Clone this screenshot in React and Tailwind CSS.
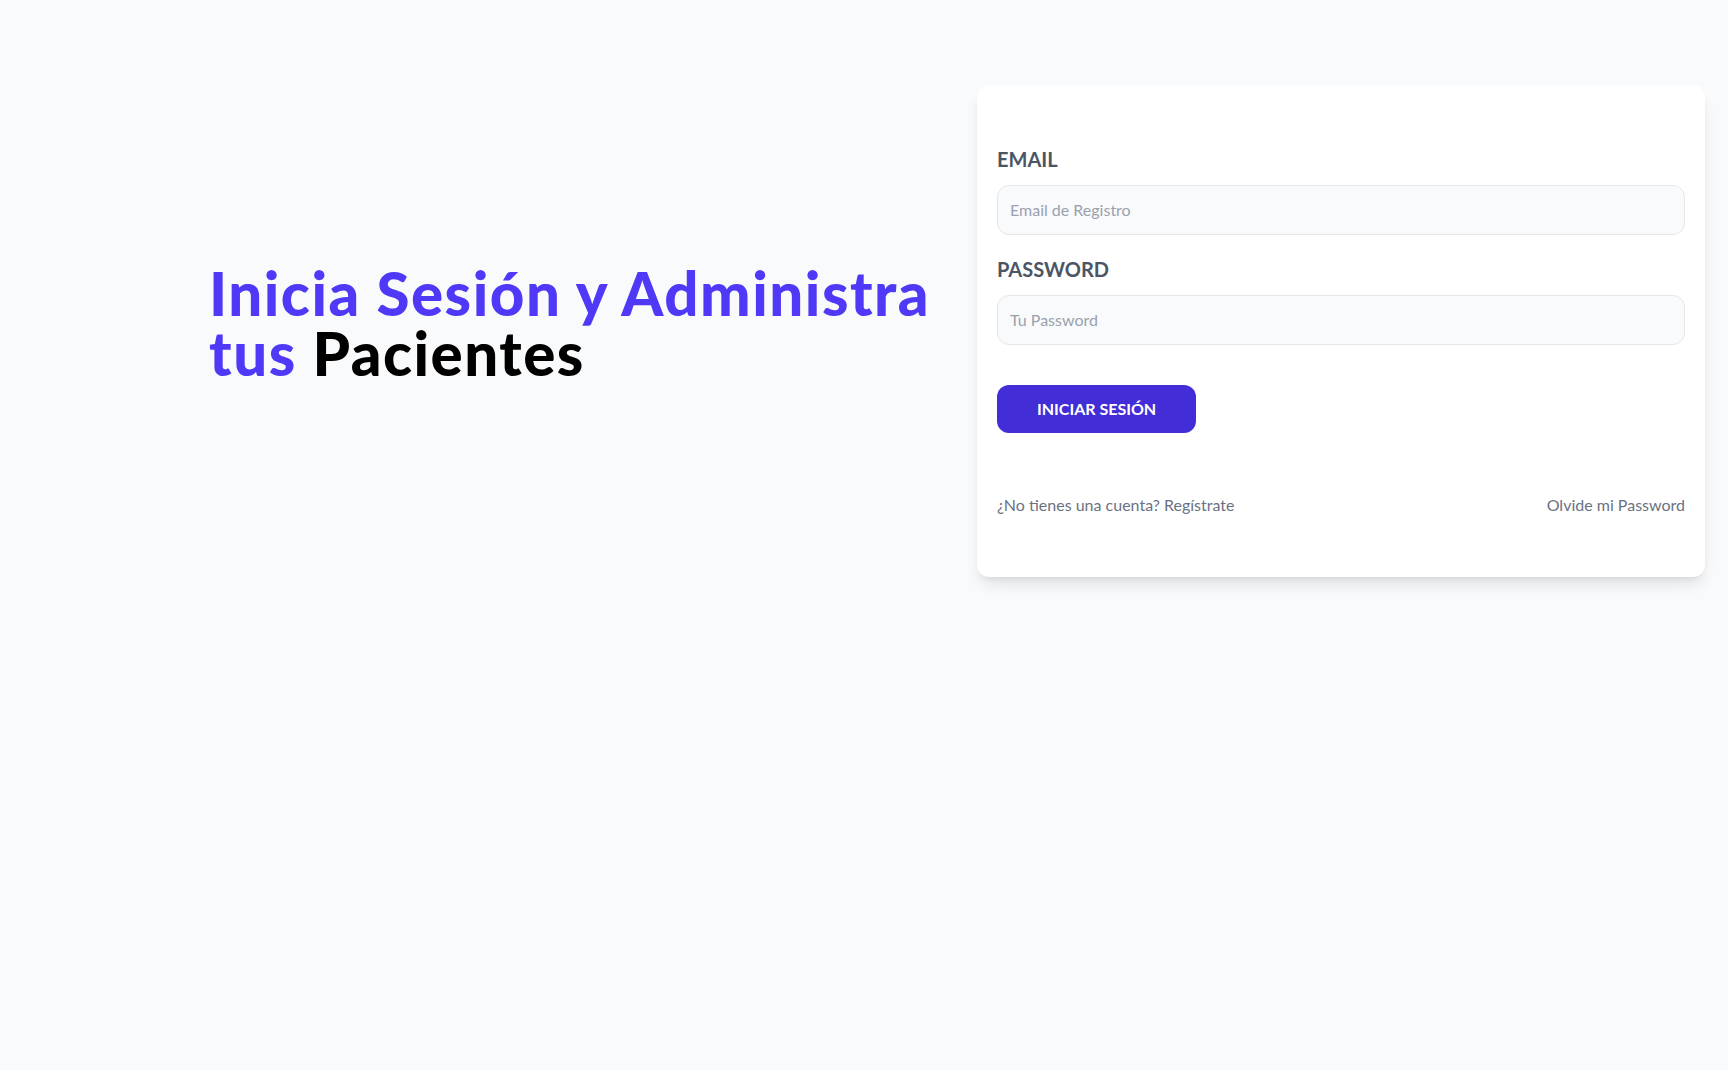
import React from 'react';

export default function App() {
  return (
    <div className="min-h-screen bg-gray-50 font-['Lato',sans-serif]">
      <main className="grid grid-cols-2 items-center gap-10 pl-[209px] pr-[23px] pt-[85px]">
        <div className="pb-4">
          <h1 className="text-6xl leading-none font-black tracking-wide text-indigo-600">
            Inicia Sesión y Administra tus <span className="text-black">Pacientes</span>
          </h1>
        </div>

        <div className="rounded-xl bg-white px-5 py-10 shadow-lg">
          <form>
            <div className="my-5">
              <label className="block text-xl font-bold uppercase text-gray-600">Email</label>
              <input
                type="email"
                placeholder="Email de Registro"
                className="mt-3 w-full rounded-xl border border-gray-200 bg-gray-50 p-3 text-base placeholder:text-gray-400"
              />
            </div>
            <div className="my-5">
              <label className="block text-xl font-bold uppercase text-gray-600">Password</label>
              <input
                type="password"
                placeholder="Tu Password"
                className="mt-3 w-full rounded-xl border border-gray-200 bg-gray-50 p-3 text-base placeholder:text-gray-400"
              />
            </div>
            <button
              type="button"
              className="mt-5 rounded-xl bg-indigo-700 px-10 py-3 font-bold uppercase text-white"
            >
              Iniciar Sesión
            </button>
          </form>

          <nav className="mt-[60px] mb-5 flex justify-between">
            <a href="#" className="text-gray-500">¿No tienes una cuenta? Regístrate</a>
            <a href="#" className="text-gray-500">Olvide mi Password</a>
          </nav>
        </div>
      </main>
    </div>
  );
}
